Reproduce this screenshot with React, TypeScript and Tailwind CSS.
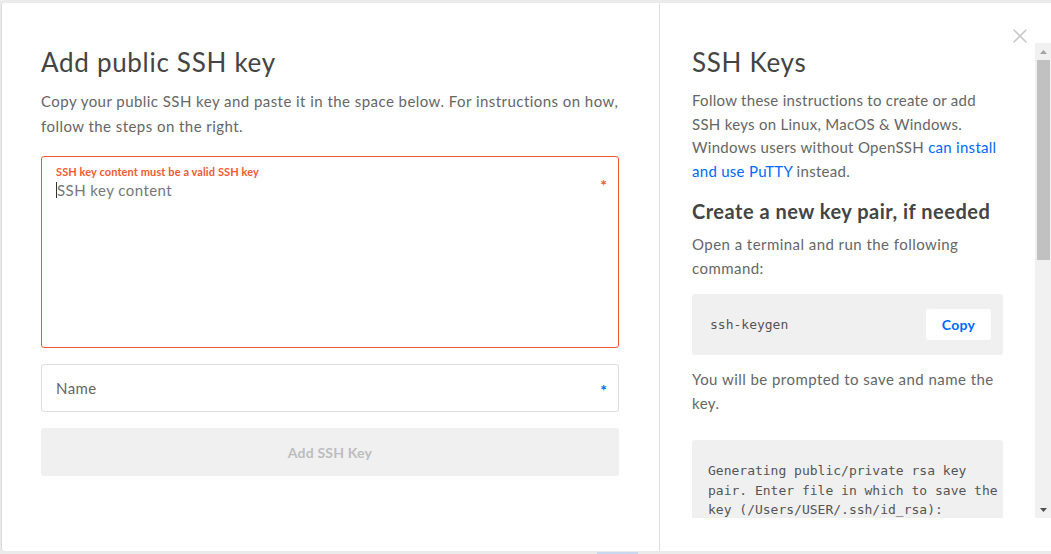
const sans = "font-['Lato','Open_Sans',sans-serif]";
const mono = "font-['DejaVu_Sans_Mono','Liberation_Mono',monospace]";

function Field({
  label,
  error,
  tall,
  starColor,
  borderColor,
}: {
  label: string;
  error?: string;
  tall?: boolean;
  starColor: string;
  borderColor: string;
}) {
  return (
    <div
      className={`relative rounded-[3px] border ${borderColor} ${
        tall ? "h-[192px]" : "h-[48px]"
      }`}
    >
      {error ? (
        <div className="px-[14px] pt-[8px]">
          <div className="text-[11px] font-bold leading-[14px] tracking-[0.1px] text-[#f15a30]">
            {error}
          </div>
          <div className="flex items-center">
            <span className="h-[16px] w-px bg-[#333]" />
            <span className="text-[15px] leading-[22px] tracking-[0.45px] text-[#777]">
              {label}
            </span>
          </div>
        </div>
      ) : (
        <div className="flex h-full items-center px-[14px] text-[15px] tracking-[0.45px] text-[#666]">
          {label}
        </div>
      )}
      <span
        className={`absolute right-[11px] ${
          tall ? "top-[16px]" : "top-[13px]"
        } text-[16px] font-bold ${starColor}`}
      >
        *
      </span>
    </div>
  );
}

function Scrollbar() {
  return (
    <div className="flex w-[16px] shrink-0 flex-col items-center bg-[#f1f1f1]">
      <div className="flex h-[17px] items-center justify-center">
        <svg width="7" height="4" viewBox="0 0 7 4">
          <path d="M3.5 0 7 4H0z" fill="#a3a3a3" />
        </svg>
      </div>
      <div className="h-[200px] w-[13px] bg-[#c1c1c1]" />
      <div className="flex-1" />
      <div className="flex h-[17px] items-center justify-center">
        <svg width="7" height="4" viewBox="0 0 7 4">
          <path d="M0 0h7L3.5 4z" fill="#505050" />
        </svg>
      </div>
    </div>
  );
}

export default function App() {
  return (
    <div
      className={`${sans} relative h-[554px] w-[1051px] overflow-hidden bg-[#ebebeb] pl-px pt-[3px]`}
    >
      <div className="flex h-[548px] w-[1060px] rounded-[3px] border-l border-[#d9d9d9] bg-white">
        {/* left: form */}
        <div className="w-[658px] border-r border-[#dedede] pl-[39px] pr-[40px] pt-[43px]">
          <h1 className="text-[26px] leading-[32px] tracking-[0.7px] text-[#444]">
            Add public SSH key
          </h1>
          <p className="mt-[11px] text-[15px] leading-[25px] tracking-[0.45px] text-[#666]">
            Copy your public SSH key and paste it in the space below. For
            instructions on how, follow the steps on the right.
          </p>
          <div className="mt-[17px] w-[578px]">
            <Field
              label="SSH key content"
              error="SSH key content must be a valid SSH key"
              tall
              starColor="text-[#f15a30]"
              borderColor="border-[#f15a30]"
            />
            <div className="mt-[16px]">
              <Field
                label="Name"
                starColor="text-[#0069ff]"
                borderColor="border-[#dddddd]"
              />
            </div>
            <button className="mt-[16px] flex h-[48px] w-full items-center justify-center rounded-[3px] bg-[#f0f0f0] text-[14px] font-bold tracking-[0.2px] text-[#bdbdbd]">
              Add SSH Key
            </button>
          </div>
        </div>

        {/* right: instructions */}
        <div className="flex w-[391px] flex-col">
          <div className="flex h-[40px] justify-end pr-[24px] pt-[26px]">
            <svg width="14" height="14" viewBox="0 0 14 14">
              <path
                d="M1 1 13 13M13 1 1 13"
                stroke="#c8c8c8"
                strokeWidth="1.6"
                strokeLinecap="round"
              />
            </svg>
          </div>
          <div className="flex h-[475px]">
            <div className="w-[375px] overflow-hidden px-[32px]">
              <h2 className="mt-[3px] text-[26px] leading-[32px] tracking-[0.7px] text-[#444]">
                SSH Keys
              </h2>
              <p className="mt-[11px] text-[15px] leading-[23.5px] tracking-[0.28px] text-[#666]">
                Follow these instructions to create or add SSH keys on Linux,
                MacOS &amp; Windows. Windows users without OpenSSH{" "}
                <a className="text-[#0069ff]">can install and use PuTTY</a>{" "}
                instead.
              </p>
              <h3 className="mt-[16px] text-[20px] font-bold leading-[24px] tracking-[0.5px] text-[#444]">
                Create a new key pair, if needed
              </h3>
              <p className="mt-[10px] text-[15px] leading-[23.5px] tracking-[0.45px] text-[#666]">
                Open a terminal and run the following command:
              </p>
              <div className="mt-[14px] flex h-[61px] items-center justify-between rounded-[3px] bg-[#f0f0f0] pl-[18px] pr-[12px]">
                <code className={`${mono} text-[13px] text-[#555]`}>
                  ssh-keygen
                </code>
                <button className="h-[31px] w-[65px] rounded-[3px] bg-white text-[14px] font-bold tracking-[0.3px] text-[#0069ff]">
                  Copy
                </button>
              </div>
              <p className="mt-[13px] text-[15px] leading-[23.5px] tracking-[0.45px] text-[#666]">
                You will be prompted to save and name the key.
              </p>
              <div className="mt-[25px] rounded-[3px] bg-[#f0f0f0] pb-[20px] pl-[16px] pr-[4px] pt-[21px]">
                <pre
                  className={`${mono} whitespace-pre-wrap text-[13px] leading-[19.5px] text-[#555]`}
                >
                  Generating public/private rsa key pair. Enter file in which
                  to save the key (/Users/USER/.ssh/id_rsa):
                </pre>
              </div>
            </div>
            <Scrollbar />
          </div>
        </div>
      </div>
      <div className="ml-[596px] mt-px h-[2px] w-[41px] bg-[#c9d8ee]" />
    </div>
  );
}
